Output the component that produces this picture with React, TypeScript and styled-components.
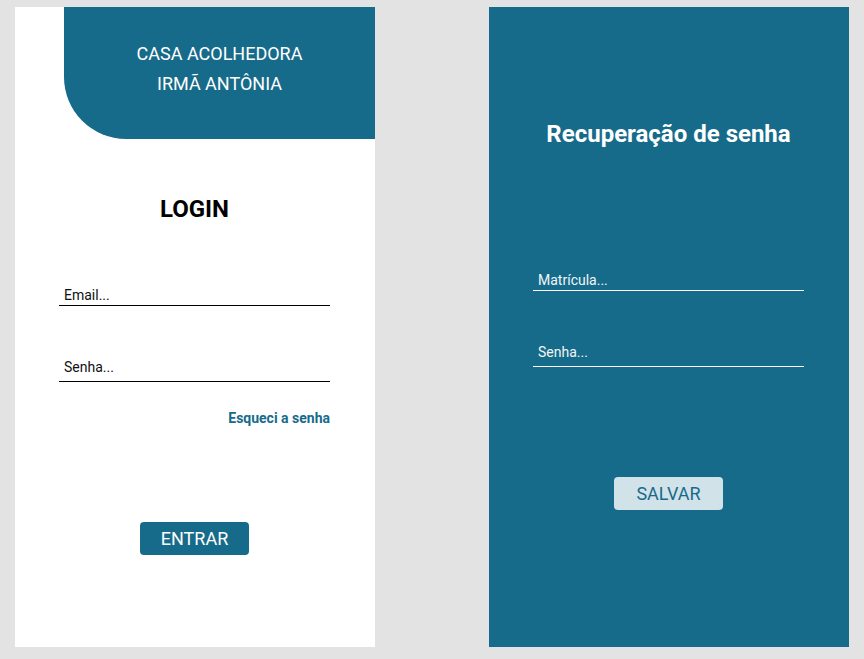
import React from "react";
import styled, { createGlobalStyle } from "styled-components";

const TEAL = "#176b8a";

const Global = createGlobalStyle`
  html, body { margin: 0; padding: 0; background: #e3e3e3; }
  body { font-family: Roboto, "Liberation Sans", Arial, sans-serif; }
  * { box-sizing: border-box; }
`;

const Page = styled.div`
  display: flex;
  gap: 114px;
  padding: 7px 0 0 15px;
  width: 864px;
  height: 659px;
  background: #e3e3e3;
`;

const Panel = styled.section<{ $dark?: boolean }>`
  width: 360px;
  height: 640px;
  background: ${(p) => (p.$dark ? TEAL : "#ffffff")};
  display: flex;
  flex-direction: column;
  align-items: center;
  padding: ${(p) => (p.$dark ? "113px" : "0")} 1px 0 0;
`;

const Header = styled.header`
  align-self: flex-end;
  margin-right: -1px;
  width: 311px;
  height: 132px;
  background: ${TEAL};
  border-bottom-left-radius: 62px;
  display: flex;
  flex-direction: column;
  align-items: center;
  justify-content: center;
  color: #ffffff;
  font-size: 18px;
  line-height: 30px;
  padding-bottom: 9px;
`;

const Title = styled.h1<{ $dark?: boolean }>`
  margin: ${(p) => (p.$dark ? "0" : "56px 0 0")};
  font-size: 24px;
  line-height: 28px;
  font-weight: 700;
  color: ${(p) => (p.$dark ? "#ffffff" : "#000000")};
`;

const Field = styled.input<{ $dark?: boolean; $tall?: boolean; $gap: number }>`
  display: block;
  width: 271px;
  height: ${(p) => (p.$tall ? 25 : 21)}px;
  margin-top: ${(p) => p.$gap}px;
  padding: 0 0 ${(p) => (p.$tall ? 4 : 1)}px 5px;
  border: none;
  border-bottom: 1px solid ${(p) => (p.$dark ? "#ffffff" : "#000000")};
  background: transparent;
  outline: none;
  font-family: Roboto, "Liberation Sans", Arial, sans-serif;
  font-size: 14px;
  color: ${(p) => (p.$dark ? "#ffffff" : "#000000")};
  &::placeholder {
    color: ${(p) => (p.$dark ? "#f2f6f8" : "#111111")};
    opacity: 1;
  }
`;

const Forgot = styled.a`
  display: block;
  width: 271px;
  margin-top: 28px;
  text-align: right;
  font-size: 14px;
  line-height: 17px;
  font-weight: 700;
  color: ${TEAL};
  text-decoration: none;
`;

const Button = styled.button<{ $light?: boolean; $gap: number }>`
  width: 109px;
  height: 33px;
  margin-top: ${(p) => p.$gap}px;
  border: none;
  border-radius: 4px;
  background: ${(p) => (p.$light ? "#d1e2e9" : TEAL)};
  color: ${(p) => (p.$light ? TEAL : "#ffffff")};
  font-family: Roboto, "Liberation Sans", Arial, sans-serif;
  font-size: 18px;
  padding: 0;
  cursor: pointer;
`;

export default function App() {
  return (
    <>
      <Global />
      <Page>
        <Panel>
          <Header>
            <span>CASA ACOLHEDORA</span>
            <span>IRMÃ ANTÔNIA</span>
          </Header>
          <Title>LOGIN</Title>
          <Field $gap={62} placeholder="Email..." />
          <Field $gap={51} $tall type="password" placeholder="Senha..." />
          <Forgot href="#">Esqueci a senha</Forgot>
          <Button $gap={95}>ENTRAR</Button>
        </Panel>
        <Panel $dark>
          <Title $dark>Recuperação de senha</Title>
          <Field $dark $gap={122} placeholder="Matrícula..." />
          <Field $dark $tall $gap={51} type="password" placeholder="Senha..." />
          <Button $light $gap={110}>SALVAR</Button>
        </Panel>
      </Page>
    </>
  );
}
